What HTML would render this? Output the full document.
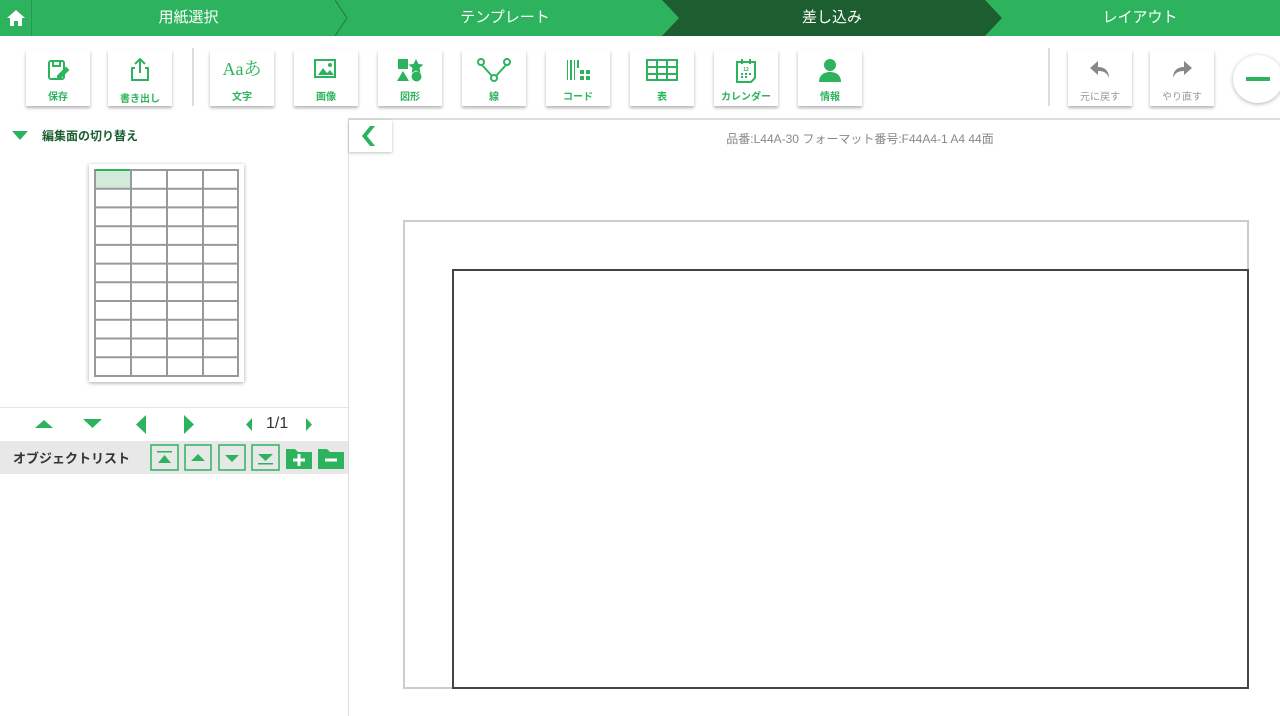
<!DOCTYPE html>
<html><head><meta charset="utf-8"><style>
*{margin:0;padding:0;box-sizing:border-box}
body{width:1280px;height:716px;position:relative;overflow:hidden;background:#fff;font-family:"Liberation Sans","Noto Sans CJK JP",sans-serif}
.nav{position:absolute;top:0;left:0;width:1280px;height:36px;background:#2db35d}
.seg{position:absolute;top:0;height:36px;color:#fff;font-size:15px;line-height:36px;text-align:center}
.btn{position:absolute;top:50px;width:64px;height:56px;background:#fff;box-shadow:0 2px 3px rgba(0,0,0,.3);text-align:center;color:#2db35d;font-size:10px;font-weight:bold}
.btn svg{position:absolute;left:50%;top:20px;transform:translate(-50%,-50%)}
.btn span{position:absolute;left:0;right:0;top:38px}
.g{color:#999;font-weight:normal}
.abs{position:absolute}
</style></head><body>
<div class="nav">
<div class="seg" style="left:0;width:32px;border-right:1px solid #259a4f"><svg width="20" height="18" viewBox="0 0 20 18" style="margin-top:9px"><path d="M10 1L1 9h3v8h4v-5h4v5h4V9h3z" fill="#fff"/></svg></div>
<div class="seg" style="left:32px;width:313px">用紙選択</div>
<svg class="abs" style="left:335px;top:0" width="20" height="36"><path d="M0 0L12 18L0 36" stroke="#1f7a40" fill="none"/></svg>
<div class="seg" style="left:345px;width:320px">テンプレート</div>
<div class="seg" style="left:662px;width:340px;background:#1c5e30;clip-path:polygon(0 0,95% 0,100% 50%,95% 100%,0 100%,5% 50%)">差し込み</div>
<div class="seg" style="left:1000px;width:280px">レイアウト</div>
</div>

<div class="btn" style="left:26px"><svg width="24" height="24" viewBox="0 0 24 24" fill="none" stroke="#2db35d" stroke-width="2"><rect x="3" y="3" width="15" height="18" rx="2"/><path d="M7 3v5h7V3"/><path d="M12 18l8-8 2 2-8 8h-2z" fill="#2db35d"/></svg><span>保存</span></div>
<div class="btn" style="left:108px"><svg width="24" height="26" viewBox="0 0 24 26" fill="none" stroke="#2db35d" stroke-width="2"><path d="M12 16V2M7 7l5-5 5 5M7 11H4v12h16V11h-3"/></svg><span style="top:40px">書き出し</span></div>
<div class="abs" style="left:192px;top:48px;width:2px;height:58px;background:#ddd"></div>
<div class="btn" style="left:210px"><div style="position:absolute;left:0;right:0;top:9px;font-family:'Liberation Serif','Noto Serif CJK SC',serif;font-size:18px;font-weight:normal;line-height:20px">Aaあ</div><span>文字</span></div>
<div class="btn" style="left:294px"><svg width="24" height="22" viewBox="0 0 24 22"><rect x="1" y="1" width="20" height="17" fill="none" stroke="#2db35d" stroke-width="2"/><path d="M4 16l5-7 4 5 3-3 4 5z" fill="#2db35d"/><circle cx="16" cy="6" r="2" fill="#2db35d"/></svg><span>画像</span></div>
<div class="btn" style="left:378px"><svg width="26" height="24" viewBox="0 0 26 24" fill="#2db35d"><rect x="1" y="1" width="10" height="10"/><path d="M19 1l2.5 5 5 .5-4 3.5 1 5-4.5-2.5-4.5 2.5 1-5-4-3.5 5-.5z"/><path d="M6 13l6 10H0z"/><circle cx="19.5" cy="18.5" r="5"/></svg><span>図形</span></div>
<div class="btn" style="left:462px"><svg width="34" height="24" viewBox="0 0 34 24" fill="none" stroke="#2db35d" stroke-width="2"><circle cx="4" cy="4" r="3"/><circle cx="30" cy="4" r="3"/><circle cx="17" cy="20" r="3"/><path d="M5 7l10 11M29 7L19 18"/></svg><span>線</span></div>
<div class="btn" style="left:546px"><svg width="26" height="24" viewBox="0 0 26 24" fill="#2db35d"><path d="M2 2h1v20H2zM5 2h2v20H5zM9 2h1v20H9zM12 2h2v8h-2z"/><rect x="15" y="12" width="4" height="4"/><rect x="21" y="12" width="4" height="4"/><rect x="15" y="18" width="4" height="4"/><rect x="21" y="18" width="4" height="4"/></svg><span>コード</span></div>
<div class="btn" style="left:630px"><svg width="32" height="22" viewBox="0 0 32 22" fill="none" stroke="#2db35d" stroke-width="2"><rect x="1" y="1" width="30" height="20"/><path d="M1 8h30M1 15h30M11 1v20M21 1v20"/></svg><span>表</span></div>
<div class="btn" style="left:714px"><svg width="22" height="26" viewBox="0 0 22 26" fill="none" stroke="#2db35d" stroke-width="2"><path d="M2 5h18v16l-4 4H2z"/><path d="M7 2v5M15 2v5"/><text x="11" y="14" font-size="5" fill="#2db35d" stroke="none" text-anchor="middle">12</text><path d="M6 17h2M10 17h2M14 17h2M6 20h2M10 20h2"/></svg><span>カレンダー</span></div>
<div class="btn" style="left:798px"><svg width="24" height="24" viewBox="0 0 24 24" fill="#2db35d"><circle cx="12" cy="7" r="6"/><path d="M1 24c0-7 5-10 11-10s11 3 11 10z"/></svg><span>情報</span></div>
<div class="abs" style="left:1048px;top:48px;width:2px;height:58px;background:#ddd"></div>
<div class="btn g" style="left:1068px"><svg width="24" height="22" viewBox="0 0 24 22"><path d="M10 2L2 9l8 7v-4c6 0 9 2 11 7 0-7-4-11-11-11z" fill="#888"/></svg><span>元に戻す</span></div>
<div class="btn g" style="left:1150px"><svg width="24" height="22" viewBox="0 0 24 22"><path d="M14 2l8 7-8 7v-4c-6 0-9 2-11 7 0-7 4-11 11-11z" fill="#888"/></svg><span>やり直す</span></div>
<div class="abs" style="left:1233px;top:55px;width:50px;height:48px;border-radius:50%;background:#fff;box-shadow:0 1px 4px rgba(0,0,0,.3)"><div style="position:absolute;left:13px;top:22px;width:24px;height:4px;background:#2db35d"></div></div>

<div class="abs" style="left:349px;top:118px;width:931px;height:2px;background:#ddd"></div>
<div class="abs" style="left:348px;top:118px;width:1px;height:598px;background:#ddd"></div>

<svg class="abs" style="left:12px;top:131px" width="16" height="10"><path d="M0 0h16L8 9z" fill="#2db35d"/></svg>
<div class="abs" style="left:42px;top:127px;font-size:12px;font-weight:bold;color:#1c5e30">編集面の切り替え</div>
<div class="abs" style="left:89px;top:164px;width:155px;height:218px;background:#fff;box-shadow:0 1px 4px rgba(0,0,0,.35)"></div>
<svg class="abs" style="left:94px;top:169px" width="146" height="209">
<rect x="1" y="1" width="35" height="18" fill="#d3ead9"/>
<g stroke="#999" stroke-width="2" fill="none">
<rect x="1" y="1" width="143" height="206"/>
<path d="M37 1v206M73 1v206M109 1v206"/>
<path d="M1 19.7h143M1 38.4h143M1 57.2h143M1 75.9h143M1 94.6h143M1 113.3h143M1 132h143M1 150.7h143M1 169.5h143M1 188.2h143"/>
</g>
<path d="M1 1h35" stroke="#2db35d" stroke-width="2"/></svg>
<div class="abs" style="left:0;top:407px;width:348px;height:1px;background:#e5e5e5"></div>
<svg class="abs" style="left:0;top:410px" width="348" height="30" fill="#2db35d">
<path d="M35 18l9-8 9 8z"/><path d="M83 9h19l-9.5 9z"/><path d="M146 5v19l-10-9.5z"/><path d="M184 5v19l10-9.5z"/><path d="M252 8v13l-6-6.5z"/><path d="M306 8v13l6-6.5z"/>
</svg>
<div class="abs" style="left:266px;top:415px;font-size:16px;color:#333">1/1</div>
<div class="abs" style="left:0;top:441px;width:348px;height:33px;background:#e8e8e8"></div>
<div class="abs" style="left:13px;top:448px;font-size:13px;font-weight:bold;color:#333">オブジェクトリスト</div>
<svg class="abs" style="left:150px;top:444px" width="198" height="28">
<g fill="none" stroke="#2db35d" stroke-width="1.5"><rect x="1" y="1" width="27" height="25"/><rect x="35" y="1" width="26" height="25"/><rect x="69" y="1" width="26" height="25"/><rect x="102" y="1" width="27" height="25"/></g>
<g fill="#2db35d"><path d="M7 7h15v1.5H7z"/><path d="M8 19l6.5-8 6.5 8z"/><path d="M41 17l7-7 7 7z"/><path d="M75 11h14l-7 7z"/><path d="M108 10h15l-7.5 7z"/><path d="M108 19h15v1.5h-15z"/>
<path d="M136 5h9l3 3h14v17h-26z"/><path d="M168 5h9l3 3h14v17h-26z"/></g>
<g stroke="#fff" stroke-width="3"><path d="M143 16h12M149 10v12M175 16h12"/></g></svg>

<div class="abs" style="left:349px;top:120px;width:43px;height:32px;background:#fff;box-shadow:0 1px 3px rgba(0,0,0,.25)"><svg width="43" height="32"><path d="M26 6l-8 10 8 10h-5l-8-10 8-10z" fill="#2db35d"/></svg></div>
<div class="abs" style="left:560px;top:130px;width:600px;text-align:center;font-size:12px;color:#888">品番:L44A-30 フォーマット番号:F44A4-1 A4 44面</div>

<div class="abs" style="left:403px;top:220px;width:846px;height:469px;border:2px solid #ccc"></div>
<div class="abs" style="left:452px;top:269px;width:797px;height:420px;border:2px solid #444"></div>
</body></html>
